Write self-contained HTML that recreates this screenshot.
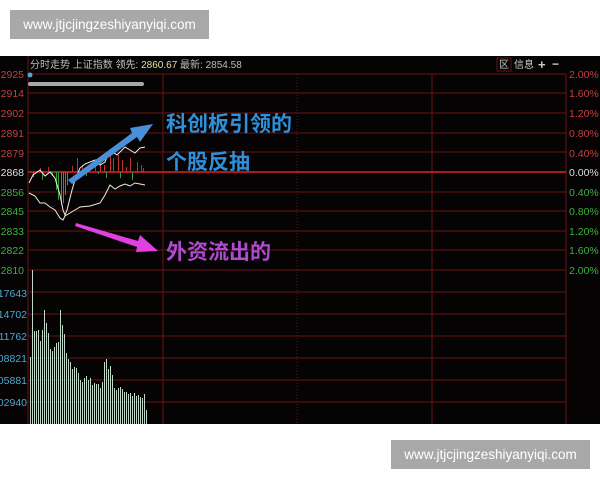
<!DOCTYPE html>
<html><head><meta charset="utf-8"><style>
body{margin:0;width:600px;height:480px;background:#fff;position:relative;overflow:hidden;font-family:"Liberation Sans","Noto Sans CJK SC",sans-serif}
.wm{position:absolute;background:#a8a8a8;color:#fff;font-size:13.5px;text-align:center;line-height:29px;width:199px;height:29px}
</style></head><body>
<div class="wm" style="left:10px;top:10px">www.jtjcjingzeshiyanyiqi.com</div>
<div class="wm" style="left:391px;top:440px">www.jtjcjingzeshiyanyiqi.com</div>
<svg style="position:absolute;left:0;top:56px" width="600" height="368" viewBox="0 56 600 368" font-family="Liberation Sans, Noto Sans CJK SC, sans-serif">
<rect x="0" y="56" width="600" height="368" fill="#050303"/>
<g stroke="#6a1414" stroke-width="1">
<line x1="28" y1="74" x2="566" y2="74"/><line x1="28" y1="93" x2="566" y2="93"/><line x1="28" y1="113" x2="566" y2="113"/><line x1="28" y1="133" x2="566" y2="133"/><line x1="28" y1="152" x2="566" y2="152"/><line x1="28" y1="192" x2="566" y2="192"/><line x1="28" y1="211" x2="566" y2="211"/><line x1="28" y1="231" x2="566" y2="231"/><line x1="28" y1="250" x2="566" y2="250"/><line x1="28" y1="270" x2="566" y2="270"/><line x1="28" y1="292" x2="566" y2="292"/><line x1="28" y1="314" x2="566" y2="314"/><line x1="28" y1="336" x2="566" y2="336"/><line x1="28" y1="358" x2="566" y2="358"/><line x1="28" y1="380" x2="566" y2="380"/><line x1="28" y1="402" x2="566" y2="402"/>
<line x1="28" y1="56" x2="28" y2="424"/><line x1="163" y1="74" x2="163" y2="424"/><line x1="432" y1="74" x2="432" y2="424"/><line x1="566" y1="74" x2="566" y2="424"/>
</g>
<line x1="297" y1="74" x2="297" y2="424" stroke="#5a1a1a" stroke-dasharray="1,2"/>
<line x1="28" y1="172" x2="566" y2="172" stroke="#b01818" stroke-width="2"/>
<g font-size="10.5">
<text x="24" y="78" fill="#c04040" text-anchor="end">2925</text><text x="24" y="97" fill="#c04040" text-anchor="end">2914</text><text x="24" y="117" fill="#c04040" text-anchor="end">2902</text><text x="24" y="137" fill="#c04040" text-anchor="end">2891</text><text x="24" y="157" fill="#c04040" text-anchor="end">2879</text><text x="24" y="176" fill="#ddd" text-anchor="end">2868</text><text x="24" y="196" fill="#40b040" text-anchor="end">2856</text><text x="24" y="215" fill="#40b040" text-anchor="end">2845</text><text x="24" y="235" fill="#40b040" text-anchor="end">2833</text><text x="24" y="254" fill="#40b040" text-anchor="end">2822</text><text x="24" y="274" fill="#40b040" text-anchor="end">2810</text>
<g fill="#4fa8d0" text-anchor="end"><text x="27" y="297">17643</text><text x="27" y="318">14702</text><text x="27" y="340">11762</text><text x="27" y="362">08821</text><text x="27" y="384">05881</text><text x="27" y="406">02940</text></g>
<text x="569" y="78" fill="#c04040">2.00%</text><text x="569" y="97" fill="#c04040">1.60%</text><text x="569" y="117" fill="#c04040">1.20%</text><text x="569" y="137" fill="#c04040">0.80%</text><text x="569" y="157" fill="#c04040">0.40%</text><text x="569" y="176" fill="#ddd">0.00%</text><text x="569" y="196" fill="#40b040">0.40%</text><text x="569" y="215" fill="#40b040">0.80%</text><text x="569" y="235" fill="#40b040">1.20%</text><text x="569" y="254" fill="#40b040">1.60%</text><text x="569" y="274" fill="#40b040">2.00%</text>
</g>
<text x="30" y="68" font-size="10" fill="#bbb">分时走势  上证指数 <tspan fill="#ccc">领先: </tspan><tspan fill="#e0e0a0">2860.67</tspan> 最新: 2854.58</text>
<g font-size="10" fill="#ccc"><rect x="497" y="58" width="14" height="13" fill="none" stroke="#5a1a1a"/><text x="499" y="68">区</text><text x="514" y="68">信息</text><text x="538" y="69" font-weight="bold" font-size="13">+</text><text x="552" y="68" font-weight="bold" font-size="12">−</text></g>
<circle cx="30" cy="75" r="2.5" fill="#4fa8d0"/>
<line x1="30" y1="84" x2="142" y2="84" stroke="#a8a8a8" stroke-width="4" stroke-linecap="round"/>
<g transform="translate(0.5,0)">
<g stroke="#c03030" stroke-width="1">
<path d="M40 172V168M48 172V167M110 172V150M113 172V158M77 172V158M95 172V162M100 172V160M118 172V155M122 172V160M126 172V167M130 172V158M137 172V162M141 172V165M143 172V168M72 172V166M82 172V165M104 172V165"/>
</g>
<g stroke="#30a030" stroke-width="1">
<path d="M33 172V177M42 172V180M52 172V176M56 172V190M58 172V200M61 172V205M63 172V203M65 172V195M67 172V185M86 172V176M98 172V174M106 172V178M120 172V178M132 172V180"/>
</g>
<g stroke="#c0d8c8" stroke-width="1">
<path d="M30 424V357M32 424V270M34 424V331M36 424V331M38 424V330M40 424V341M42 424V330M44 424V310M46 424V323M48 424V333M50 424V349M52 424V351M54 424V347M56 424V343M58 424V342M60 424V310M62 424V325M64 424V334M66 424V353M68 424V359M70 424V362M72 424V369M74 424V367M76 424V368M78 424V373M80 424V380M82 424V382M84 424V378M86 424V376M88 424V380M90 424V378M92 424V385M94 424V383M96 424V384M98 424V384M100 424V388M102 424V382M104 424V362M106 424V359M108 424V369M110 424V366M112 424V375M114 424V388M116 424V390M118 424V388M120 424V387M122 424V389M124 424V392M126 424V392M128 424V394M130 424V393M132 424V396M134 424V393M136 424V396M138 424V395M140 424V397M142 424V398M144 424V394M146 424V410"/>
</g>
</g>
<polyline fill="none" stroke="#f0f0f0" stroke-width="1" points="29,183 33,175 40,170 45,176 50,172 55,178 60,195 63,210 65,215 67,210 72,190 75,180 80,168 85,164 95,160 100,165 105,162 110,150 117,155 125,147 130,150 135,153 140,148 145,147"/>
<polyline fill="none" stroke="#f0f0d0" stroke-width="1" points="29,193 35,196 40,203 45,203 50,207 55,210 60,218 63,220 65,216 70,213 75,210 80,207 90,206 100,203 105,195 110,185 115,189 120,186 125,184 130,186 135,183 140,184 145,185"/>
<polygon points="68,180 132,133 130,128 153,124 140,142 137,137 72,184" fill="#4a90d8"/>
<polygon points="76,223 138,241 140,235 158,251 136,252 137,247 75,226" fill="#e040e0"/>
<g font-size="21" font-weight="bold"><text x="166" y="131" fill="#2f8fd8">科创板引领的</text><text x="166" y="169" fill="#2f8fd8">个股反抽</text><text x="166" y="259" fill="#b04ad0">外资流出的</text></g>
</svg>
</body></html>
